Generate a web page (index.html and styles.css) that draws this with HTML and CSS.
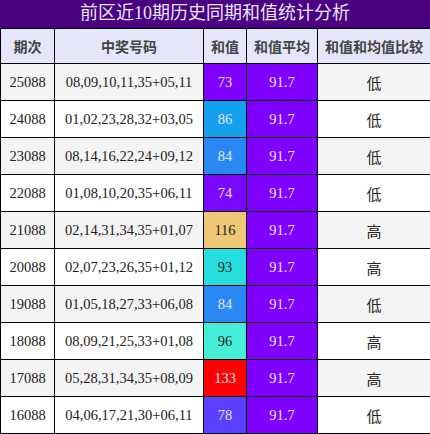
FILE: index.html
```html
<!DOCTYPE html>
<html lang="zh">
<head>
  <meta charset="UTF-8" />
  <title>前区近10期历史同期和值统计分析</title>
  <link rel="stylesheet" href="styles.css">
</head>
<body>

<div class="stats">
  <div class="stats-title">前区近10期历史同期和值统计分析</div>
  <table class="stats-table">
    <colgroup>
      <col class="c-issue">
      <col class="c-nums">
      <col class="c-sum">
      <col class="c-avg">
      <col class="c-cmp">
    </colgroup>
    <thead>
      <tr>
        <th>期次</th>
        <th>中奖号码</th>
        <th>和值</th>
        <th>和值平均</th>
        <th>和值和均值比较</th>
      </tr>
    </thead>
    <tbody>
      <tr><td>25088</td><td>08,09,10,11,35+05,11</td><td class="sum" style="background:#7f00ff">73</td><td class="avg">91.7</td><td class="cmp">低</td></tr>
      <tr><td>24088</td><td>01,02,23,28,32+03,05</td><td class="sum" style="background:#14a0ef">86</td><td class="avg">91.7</td><td class="cmp">低</td></tr>
      <tr><td>23088</td><td>08,14,16,22,24+09,12</td><td class="sum" style="background:#2a88f2">84</td><td class="avg">91.7</td><td class="cmp">低</td></tr>
      <tr><td>22088</td><td>01,08,10,20,35+06,11</td><td class="sum" style="background:#7a08fc">74</td><td class="avg">91.7</td><td class="cmp">低</td></tr>
      <tr><td>21088</td><td>02,14,31,34,35+01,07</td><td class="sum dark" style="background:#eec877">116</td><td class="avg">91.7</td><td class="cmp">高</td></tr>
      <tr><td>20088</td><td>02,07,23,26,35+01,12</td><td class="sum dark" style="background:#26dede">93</td><td class="avg">91.7</td><td class="cmp">高</td></tr>
      <tr><td>19088</td><td>01,05,18,27,33+06,08</td><td class="sum" style="background:#2a88f2">84</td><td class="avg">91.7</td><td class="cmp">低</td></tr>
      <tr><td>18088</td><td>08,09,21,25,33+01,08</td><td class="sum dark" style="background:#46eed8">96</td><td class="avg">91.7</td><td class="cmp">高</td></tr>
      <tr><td>17088</td><td>05,28,31,34,35+08,09</td><td class="sum" style="background:#ff0000">133</td><td class="avg">91.7</td><td class="cmp">高</td></tr>
      <tr><td>16088</td><td>04,06,17,21,30+06,11</td><td class="sum" style="background:#5a40ff">78</td><td class="avg">91.7</td><td class="cmp">低</td></tr>
    </tbody>
  </table>
</div>

</body>
</html>
```

FILE: styles.css
```css
* {
  box-sizing: border-box;
  margin: 0;
  padding: 0;
}

body {
  background-color: #fff;
  font-family: "Liberation Serif", "Noto Sans CJK SC", serif;
}

.stats {
  width: 430px;
}

.stats-title {
  height: 28px;
  background-color: #4b0082;
  color: #e6e6fa;
  font-size: 18px;
  line-height: 27px;
  text-align: center;
}

.stats-table {
  width: 430px;
  border-collapse: collapse;
  table-layout: fixed;
  border: 1px solid #000;
}

.c-issue { width: 54px; }
.c-nums { width: 149px; }
.c-sum { width: 43px; }
.c-avg { width: 71px; }
.c-cmp { width: 113px; }

.stats-table th,
.stats-table td {
  border: 1px solid #000;
  text-align: center;
  padding: 0;
  white-space: nowrap;
}

.stats-table th {
  height: 35px;
  background-color: #e6e6fa;
  color: #444;
  font-family: "Noto Sans CJK SC", sans-serif;
  font-size: 14px;
  font-weight: bold;
}

.stats-table td {
  height: 37px;
  font-size: 14.5px;
  color: #222;
}

.stats-table tbody tr:nth-child(odd) {
  background-color: #f4f4f4;
}

.stats-table td.sum,
.stats-table td.avg {
  color: #e6e6fa;
}

.stats-table td.sum.dark {
  color: #222;
}

.stats-table td.avg {
  background-color: #7f00ff;
}

.stats-table td.cmp {
  font-family: "Noto Sans CJK SC", sans-serif;
  font-size: 15px;
}
```
